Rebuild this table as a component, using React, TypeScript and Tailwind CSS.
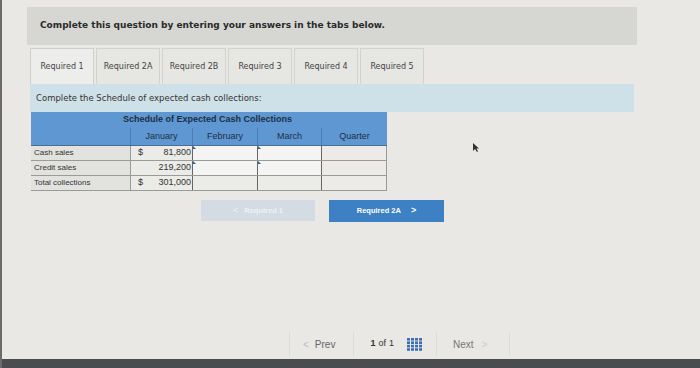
import React from 'react';

const tabs = ['Required 1', 'Required 2A', 'Required 2B', 'Required 3', 'Required 4', 'Required 5'];

const rows = [
  { label: 'Cash sales', dollar: true, value: '81,800', input: true },
  { label: 'Credit sales', dollar: false, value: '219,200', input: true },
  { label: 'Total collections', dollar: true, value: '301,000', input: false },
];

const App = () => {
  return (
    <div className="relative flex h-[368px] w-[700px] flex-col overflow-hidden border-l-2 border-[#6b6b68] bg-[#e9e8e4] font-['DejaVu_Sans',sans-serif]">
      <div className="flex flex-1 flex-col pl-[25px] pt-[7px]">
        {/* Instruction header */}
        <div className="flex h-[38px] w-[610px] items-center bg-[#d6d6d3] px-[13px] text-[9px] font-bold text-[#2a2a2a]">
          Complete this question by entering your answers in the tabs below.
        </div>

        {/* Tabs */}
        <div className="mt-[3px] flex h-[36px] gap-[2px] pl-[3px]">
          {tabs.map((t, i) => (
            <div
              key={t}
              className={`flex w-[64px] items-center justify-center border border-b-0 text-[8px] text-[#444] ${
                i === 0 ? 'border-[#cfcfcc] bg-[#ededeb]' : 'border-[#d2d2cf] bg-[#e6e6e2]'
              }`}
            >
              {t}
            </div>
          ))}
        </div>

        {/* Sub header strip */}
        <div className="ml-[3px] flex h-[28px] w-[604px] items-center bg-[#cfe1e8] px-[6px] text-[8.5px] text-[#333]">
          Complete the Schedule of expected cash collections:
        </div>

        {/* Schedule table */}
        <div className="ml-[4px] w-[356px] font-['Liberation_Sans',sans-serif] text-[9px]">
          <div className="flex h-[16px] bg-[#5f97d2]">
            <div className="w-[76px]" />
            <div className="flex w-[201px] items-center justify-center font-bold text-[#1d2f45]">
              Schedule of Expected Cash Collections
            </div>
          </div>
          <div className="flex h-[18px] border-b border-[#4a6d92] bg-[#5f97d2] text-[#1d2f45]">
            <div className="w-[100px] border-r border-[#4a7fb5]" />
            <div className="flex w-[62px] items-center justify-center border-r border-[#4a7fb5]">January</div>
            <div className="flex w-[65px] items-center justify-center border-r border-[#4a7fb5]">February</div>
            <div className="flex w-[64px] items-center justify-center border-r border-[#4a7fb5]">March</div>
            <div className="flex w-[65px] items-center justify-center">Quarter</div>
          </div>
          {rows.map((r) => (
            <div key={r.label} className="flex h-[15px] border-b border-[#9a9a98] bg-[#ebebe8] text-[#333]">
              <div className="flex w-[100px] items-center border-r border-[#9a9a98] bg-[#e2e2df] pl-[3px] text-[8px]">
                {r.label}
              </div>
              <div className="flex w-[62px] items-center justify-between border-r border-[#666] pl-[7px] pr-[1px]">
                <span>{r.dollar ? '$' : ''}</span>
                <span>{r.value}</span>
              </div>
              <div className={`relative w-[65px] border-r border-[#666] ${r.input ? 'bg-[#f4f4f2]' : ''}`}>
                {r.input && <span className="absolute left-0 top-0 h-0 w-0 border-l-[3px] border-t-[3px] border-l-[#2d5f9a] border-t-transparent" />}
              </div>
              <div className={`relative w-[64px] border-r border-[#666] ${r.input ? 'bg-[#f4f4f2]' : ''}`}>
                {r.input && <span className="absolute left-0 top-0 h-0 w-0 border-l-[3px] border-t-[3px] border-l-[#2d5f9a] border-t-transparent" />}
              </div>
              <div className="w-[65px] border-r border-[#9a9a98] bg-[#ecebe8]" />
            </div>
          ))}
        </div>

        {/* Prev / next tab buttons */}
        <div className="mt-[9px] flex gap-[14px] pl-[174px] font-['Liberation_Sans',sans-serif] text-[7.5px] font-bold">
          <div className="flex h-[21px] w-[114px] items-center justify-center gap-[6px] bg-[#d2dce2] text-[#eef2f4]">
            <span className="text-[9px] font-normal">&lt;</span>
            <span>Required 1</span>
          </div>
          <div className="flex h-[22px] w-[115px] items-center justify-center gap-[10px] bg-[#3d80c4] text-white">
            <span>Required 2A</span>
            <span className="text-[9px]">&gt;</span>
          </div>
        </div>

        <div className="flex-1" />

        {/* Bottom navigation */}
        <div className="mb-[3px] flex h-[24px] items-center pl-[262px] font-['Liberation_Sans',sans-serif] text-[#666]">
          <div className="flex h-full items-center border-l border-[#dcdcd8] pl-[13px] pr-[18px] text-[10px]">
            <span className="mr-[6px] text-[#bbb]">&lt;</span>Prev
          </div>
          <div className="flex h-full items-center gap-[3px] border-l border-[#dcdcd8] pl-[16px] text-[9px] text-[#333]">
            <span className="font-bold">1</span>
            <span>of</span>
            <span>1</span>
            <svg width="15" height="13" viewBox="0 0 15 13" className="ml-[10px]">
              {[0, 1, 2, 3].map((r) =>
                [0, 1, 2, 3].map((c) => (
                  <rect key={`${r}-${c}`} x={c * 4} y={r * 3.4} width="3" height="2.6" fill="#3d6fb0" />
                ))
              )}
            </svg>
          </div>
          <div className="ml-[14px] flex h-full items-center border-l border-[#dcdcd8] pl-[16px] pr-[22px] text-[10px] text-[#777]">
            Next<span className="ml-[8px] text-[#ccc]">&gt;</span>
          </div>
          <div className="h-full border-l border-[#dcdcd8]" />
        </div>
      </div>

      {/* Dock strip at bottom of photo */}
      <div className="h-[9px] bg-[#4a4d4f]" />

      {/* Mouse pointer */}
      <svg width="8" height="10" viewBox="0 0 8 10" className="absolute left-[470px] top-[143px]">
        <path d="M1 0 L1 8 L3 6 L5 9 L6 8.5 L4.5 5.5 L7 5.5 Z" fill="#333" />
      </svg>
    </div>
  );
};

export default App;
